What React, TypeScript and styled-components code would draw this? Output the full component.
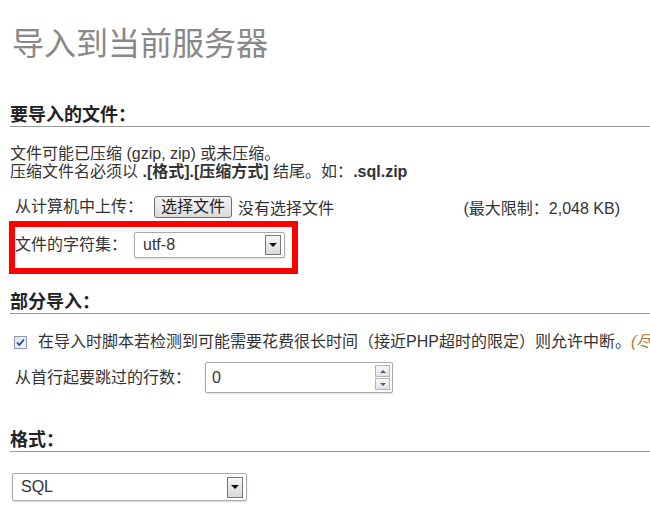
import styled, { createGlobalStyle } from "styled-components";

const GlobalStyle = createGlobalStyle`
  html, body {
    margin: 0;
    padding: 0;
    background: #fff;
  }
  body {
    font-family: "Liberation Sans", "Noto Sans CJK SC", sans-serif;
    font-size: 16px;
    color: #333;
    overflow: hidden;
  }
`;

const Page = styled.div`
  width: 640px;
  height: 522px;
  padding-left: 10px;
  overflow: hidden;
`;

const Title = styled.h1`
  margin: 24px 0 0 2px;
  font-size: 32px;
  line-height: 40px;
  font-weight: normal;
  color: #888;
`;

const SectionTitle = styled.h2<{ $top: number }>`
  margin: ${(p) => p.$top}px 0 0;
  font-size: 18px;
  line-height: 22px;
  font-weight: bold;
  color: #222;
  border-bottom: 1px solid #999;
`;

const Notes = styled.div`
  margin-top: 18px;
  line-height: 18px;
  white-space: nowrap;

  b {
    font-weight: bold;
  }
`;

const Row = styled.div<{ $top?: number }>`
  display: flex;
  align-items: center;
  margin-top: ${(p) => p.$top ?? 0}px;
  white-space: nowrap;
`;

const UploadRow = styled(Row)`
  height: 24px;
  margin-left: 5px;
  padding-right: 30px;
`;

const Label = styled.span`
  line-height: 18px;
`;

const FileButton = styled.span`
  height: 22px;
  box-sizing: border-box;
  margin-left: 11px;
  padding: 0 6px;
  line-height: 20px;
  border: 1px solid #707070;
  border-radius: 3px;
  background: linear-gradient(#f4f4f4, #dcdcdc);
  color: #222;
`;

const NoFile = styled.span`
  margin-left: 6px;
`;

const Limit = styled.span`
  margin-left: auto;
`;

const Highlight = styled.div`
  margin: 2px 0 0 -1px;
  width: 289px;
  box-sizing: border-box;
  border: 6px solid #f00;
  padding: 5px 0 10px;
`;

const Select = styled.div<{ $width: number; $height: number; $gap: number }>`
  display: flex;
  align-items: center;
  justify-content: space-between;
  box-sizing: border-box;
  width: ${(p) => p.$width}px;
  height: ${(p) => p.$height}px;
  margin-left: ${(p) => p.$gap}px;
  padding: 0 3px 0 8px;
  border: 1px solid #a9a9a9;
  border-radius: 2px;
  box-shadow: 0 1px 2px rgba(0, 0, 0, 0.15);
  background: #fff;
  color: #333;
`;

const ArrowButton = styled.span<{ $height: number }>`
  display: flex;
  align-items: center;
  justify-content: center;
  box-sizing: border-box;
  width: 16px;
  height: ${(p) => p.$height}px;
  border: 1px solid #777;
  background: linear-gradient(#f6f6f6, #d8d8d8);

  &::after {
    content: "";
    border-left: 4px solid transparent;
    border-right: 4px solid transparent;
    border-top: 4px solid #111;
  }
`;

const CheckRow = styled(Row)`
  margin-left: 4px;
  line-height: 18px;
`;

const Check = styled.svg`
  flex: none;
  margin-right: 11px;
`;

const Aside = styled.span`
  font-style: italic;
  color: #b07a3a;
`;

const SkipRow = styled(Row)`
  margin-left: 5px;
`;

const NumberBox = styled.div`
  display: flex;
  align-items: center;
  box-sizing: border-box;
  width: 188px;
  height: 31px;
  margin-left: 14px;
  padding: 0 2px 0 6px;
  border: 1px solid #aaa;
  border-radius: 2px;
  box-shadow: 0 1px 2px rgba(0, 0, 0, 0.12);
`;

const NumberValue = styled.span`
  flex: 1;
`;

const Spinner = styled.div`
  display: flex;
  flex-direction: column;
  gap: 1px;
`;

const SpinButton = styled.span<{ $up?: boolean }>`
  display: flex;
  align-items: center;
  justify-content: center;
  box-sizing: border-box;
  width: 15px;
  height: 12px;
  border: 1px solid #b5b5b5;
  background: linear-gradient(#f8f8f8, #e2e2e2);

  &::after {
    content: "";
    border-left: 3px solid transparent;
    border-right: 3px solid transparent;
    ${(p) =>
      p.$up ? "border-bottom: 3px solid #4a5c8e;" : "border-top: 3px solid #4a5c8e;"}
  }
`;

const FormatSelect = styled.div`
  margin: 21px 0 0 2px;
`;

const Checkbox = () => (
  <Check width="13" height="13" viewBox="0 0 13 13">
    <defs>
      <linearGradient id="cb" x1="0" y1="0" x2="1" y2="1">
        <stop offset="0" stopColor="#dce3ec" />
        <stop offset="1" stopColor="#f7f9fb" />
      </linearGradient>
    </defs>
    <rect x="0.5" y="0.5" width="12" height="12" fill="url(#cb)" stroke="#8e9aae" />
    <path d="M3 6.5 L5.3 9 L10 3.5" fill="none" stroke="#26479a" strokeWidth="1.8" />
  </Check>
);

export default function App() {
  return (
    <>
      <GlobalStyle />
      <Page>
        <Title>导入到当前服务器</Title>

        <SectionTitle $top={40}>要导入的文件：</SectionTitle>
        <Notes>
          文件可能已压缩 (gzip, zip) 或未压缩。
          <br />
          压缩文件名必须以 <b>.[格式].[压缩方式]</b> 结尾。如：<b>.sql.zip</b>
        </Notes>
        <UploadRow $top={14}>
          <Label>从计算机中上传：</Label>
          <FileButton>选择文件</FileButton>
          <NoFile>没有选择文件</NoFile>
          <Limit>(最大限制：2,048 KB)</Limit>
        </UploadRow>
        <Highlight>
          <Row>
            <Label>文件的字符集：</Label>
            <Select $width={151} $height={26} $gap={7}>
              <span>utf-8</span>
              <ArrowButton $height={20} />
            </Select>
          </Row>
        </Highlight>

        <SectionTitle $top={17}>部分导入：</SectionTitle>
        <CheckRow $top={19}>
          <Checkbox />
          <span>
            在导入时脚本若检测到可能需要花费很长时间（接近PHP超时的限定）则允许中断。
            <Aside>(尽管这会中断事务，但在导入大文件时是个很好的方法。)</Aside>
          </span>
        </CheckRow>
        <SkipRow $top={11}>
          <Label>从首行起要跳过的行数：</Label>
          <NumberBox>
            <NumberValue>0</NumberValue>
            <Spinner>
              <SpinButton $up />
              <SpinButton />
            </Spinner>
          </NumberBox>
        </SkipRow>

        <SectionTitle $top={36}>格式：</SectionTitle>
        <FormatSelect>
          <Select $width={235} $height={28} $gap={0}>
            <span>SQL</span>
            <ArrowButton $height={21} />
          </Select>
        </FormatSelect>
      </Page>
    </>
  );
}
